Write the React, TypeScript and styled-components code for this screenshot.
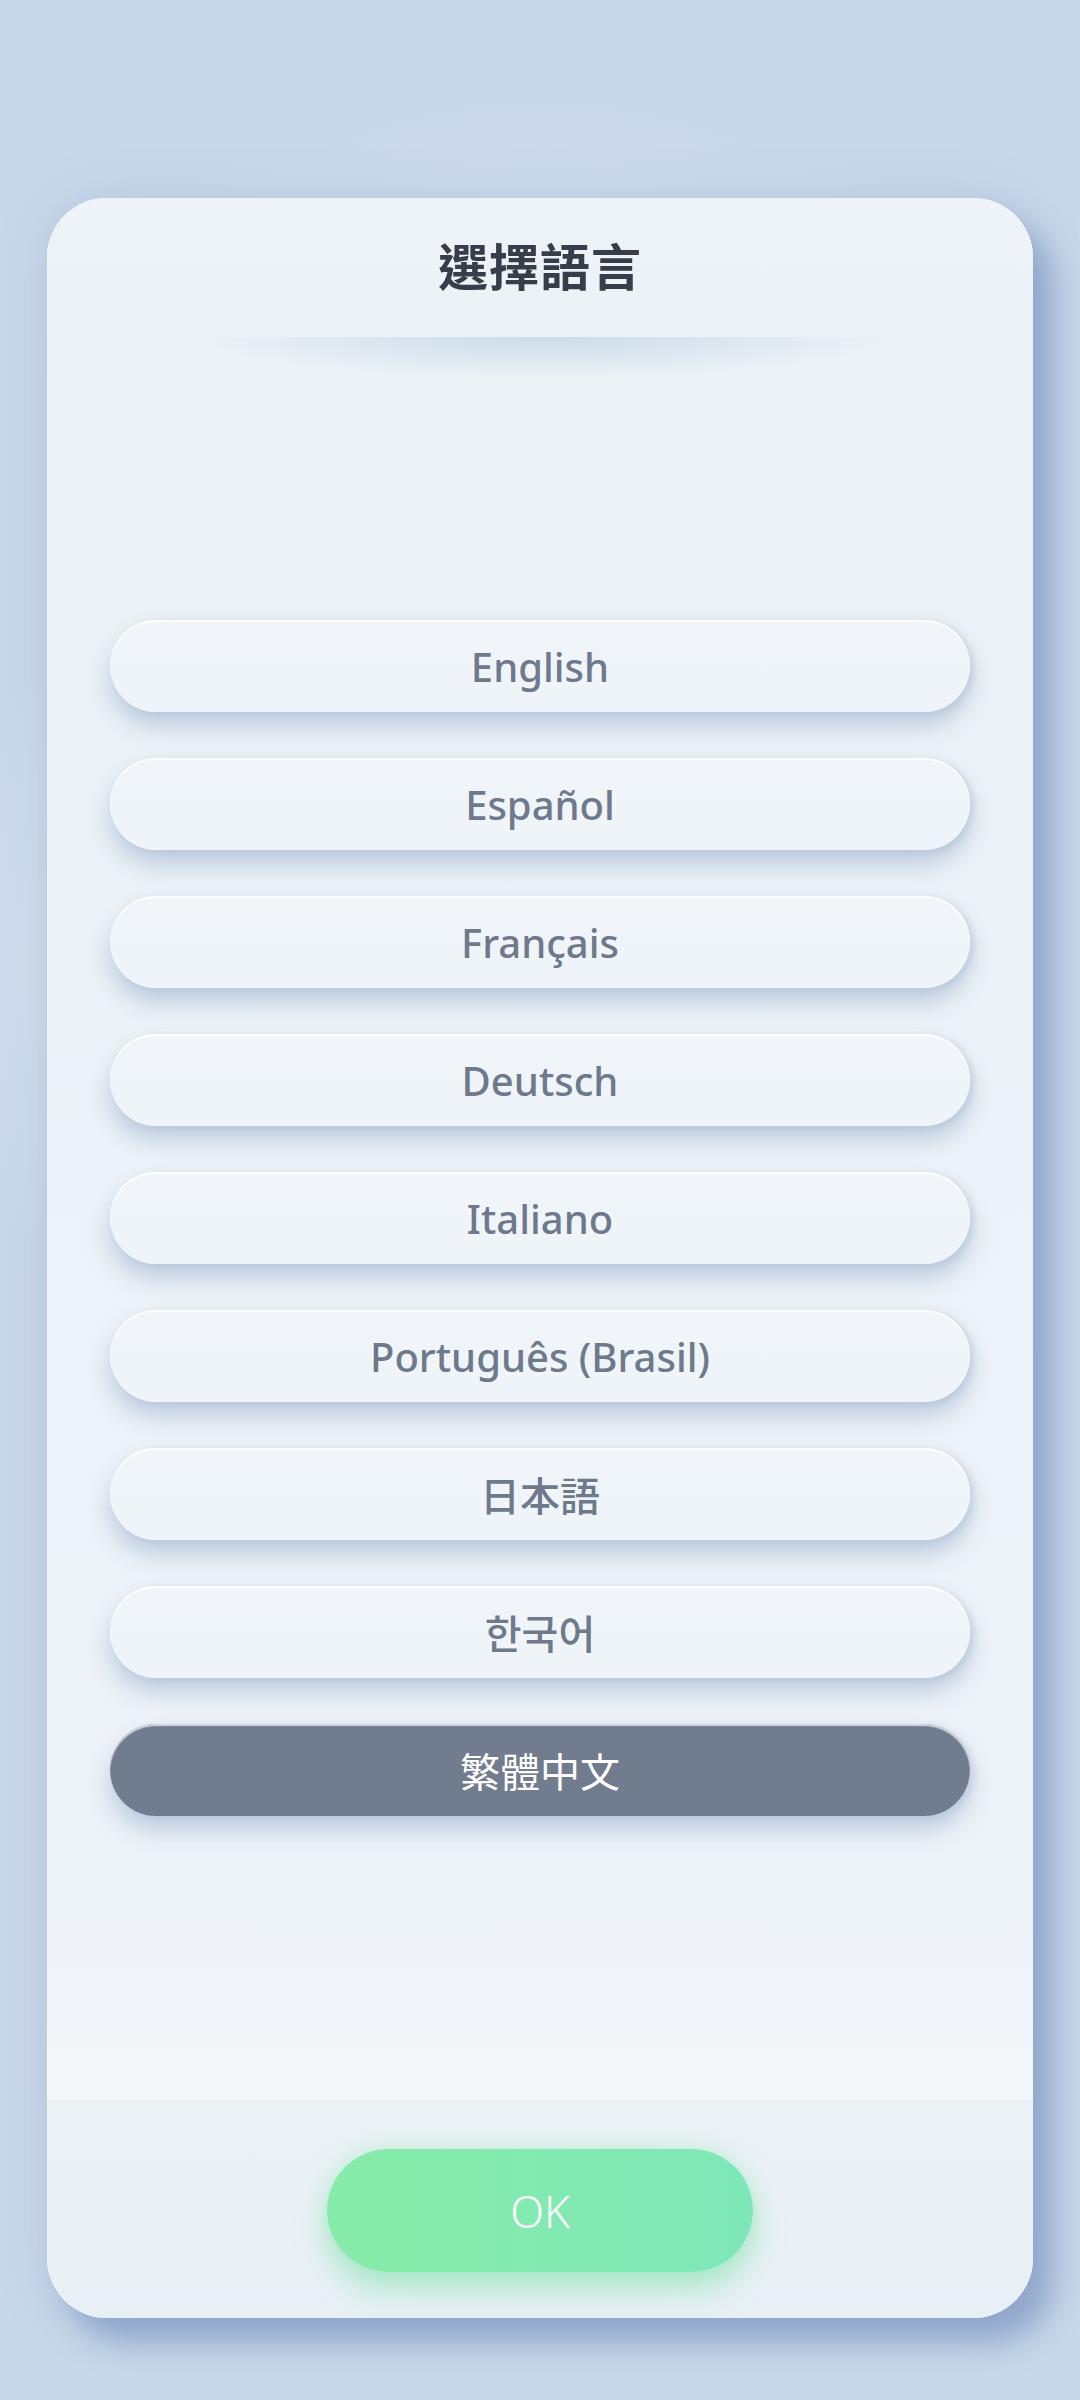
import styled, { createGlobalStyle } from 'styled-components';

const LANGUAGES = [
  'English',
  'Español',
  'Français',
  'Deutsch',
  'Italiano',
  'Português (Brasil)',
  '日本語',
  '한국어',
  '繁體中文',
];

const SELECTED = '繁體中文';

export default function App() {
  return (
    <>
      <GlobalStyle />
      <Page>
        <Dialog>
          <Header>
            <Title>選擇語言</Title>
          </Header>
          <List>
            {LANGUAGES.map((lang) => (
              <LangButton key={lang} $active={lang === SELECTED}>
                {lang}
              </LangButton>
            ))}
          </List>
          <Footer>
            <OkButton>OK</OkButton>
          </Footer>
        </Dialog>
      </Page>
    </>
  );
}

const GlobalStyle = createGlobalStyle`
  html, body {
    margin: 0;
    padding: 0;
    background: #c9d8ea;
  }

  * {
    box-sizing: border-box;
  }
`;

const Page = styled.div`
  width: 1080px;
  height: 2400px;
  padding: 198px 47px 0;
  background:
    radial-gradient(ellipse 700px 500px at 30% 40%, rgba(222, 232, 243, 0.8), transparent 70%),
    radial-gradient(ellipse 600px 400px at 50% 14%, rgba(210, 222, 236, 0.9), transparent 70%),
    #c8d7e9;
  font-family: 'Noto Sans', 'Noto Sans CJK TC', sans-serif;
`;

const Dialog = styled.div`
  display: flex;
  flex-direction: column;
  width: 986px;
  height: 2120px;
  border-radius: 60px;
  overflow: hidden;
  background: linear-gradient(160deg, #edf3f7 0%, #e9f1f5 50%, #ebf2f7 100%);
  box-shadow:
    20px 24px 30px rgba(112, 140, 186, 0.6),
    0 0 40px rgba(170, 190, 220, 0.5),
    inset 0 2px 2px rgba(255, 255, 255, 0.8);
`;

const Header = styled.div`
  position: relative;
  display: flex;
  align-items: center;
  justify-content: center;
  height: 139px;
  flex-shrink: 0;
  padding-bottom: 8px;
  background: linear-gradient(180deg, #edf3f7, #ecf3f7);

  &::after {
    content: '';
    position: absolute;
    left: 153px;
    right: 145px;
    top: 100%;
    height: 40px;
    background: radial-gradient(ellipse 50% 100% at 50% 0%, rgba(195, 210, 228, 0.75), transparent 100%);
  }
`;

const Title = styled.h1`
  margin: 0;
  font-family: 'Noto Sans CJK TC', 'Noto Sans', sans-serif;
  font-size: 50px;
  font-weight: 700;
  color: #363d4b;
  letter-spacing: 1px;
`;

const List = styled.div`
  display: flex;
  flex: 1;
  flex-direction: column;
  align-items: center;
  gap: 46px;
  padding-top: 283px;
  background: linear-gradient(180deg, #eaf2f6 0%, #edf3f8 60%, #eef3f8 88%, #f4f7fa 100%);
`;

const LangButton = styled.div<{ $active?: boolean }>`
  display: flex;
  align-items: center;
  justify-content: center;
  width: 860px;
  height: 92px;
  flex-shrink: 0;
  border-radius: 46px;
  font-family: 'Noto Sans', 'Noto Sans CJK KR', 'Noto Sans CJK TC', sans-serif;
  font-size: 40px;
  font-weight: ${({ $active }) => ($active ? 400 : 500)};
  color: ${({ $active }) => ($active ? '#ffffff' : '#6e798c')};
  background: ${({ $active }) =>
    $active ? '#727c8f' : 'linear-gradient(180deg, #f1f5f9, #eef4f9)'};
  box-shadow:
    0 14px 24px rgba(172, 190, 214, 0.75),
    4px 2px 6px rgba(190, 204, 222, 0.6),
    inset 0 2px 1px ${({ $active }) => ($active ? 'rgba(220, 224, 232, 0.9)' : 'rgba(255, 255, 255, 0.9)')};
`;

const Footer = styled.div`
  display: flex;
  justify-content: center;
  height: 218px;
  flex-shrink: 0;
  padding-top: 49px;
  background: linear-gradient(180deg, #eaf2f5, #e8f0f5);
`;

const OkButton = styled.div`
  display: flex;
  align-items: center;
  justify-content: center;
  width: 426px;
  height: 123px;
  border-radius: 62px;
  font-family: 'Noto Sans', sans-serif;
  font-size: 44px;
  font-weight: 300;
  color: #ffffff;
  background: linear-gradient(90deg, #87eca8, #7ee7b9);
  box-shadow:
    0 18px 30px rgba(130, 225, 175, 0.55),
    0 0 20px rgba(150, 230, 190, 0.4);
`;
